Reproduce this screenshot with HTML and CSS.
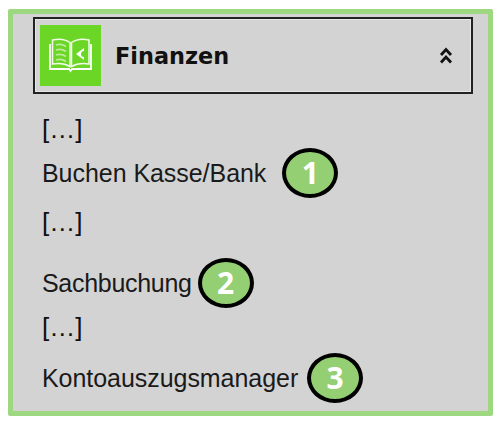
FILE: index.html
```html
<!DOCTYPE html>
<html lang="de">
<head>
<meta charset="utf-8">
<title>Finanzen</title>
<link rel="stylesheet" href="styles.css">
</head>
<body>
<section class="panel">
  <header class="head">
    <span class="tile">
      <svg viewBox="0 0 61 61" width="61" height="61" fill="none" stroke="#fff">
        <path d="M10 19v25h19l1.500 2 1.500-2h19V19" stroke-width="1.800"/>
        <path d="M12.500 15c6-1.500 12.500-1 17.500 2.500v24c-5-3-11.500-3.500-17.500-2.500z" stroke-width="1.500" opacity=".9"/>
        <path d="M49 15c-6-1.500-12.500-1-17.500 2.500v24c5-3 11.500-3.500 17.500-2.500z" stroke-width="1.500" opacity=".9"/>
        <path d="M16 20c3-1 7-.5 10 1.500M16 25c3-1 7-.5 10 1.500M16 30c3-1 7-.5 10 1.500M16 35c3-1 7-.5 10 1.500" stroke-width="1.800" opacity=".55"/>
        <path d="M44 23l-8 6 8 6z" fill="#fff" stroke="none"/>
        <circle cx="44" cy="29" r="3" fill="#6bd626" stroke="none"/>
      </svg>
    </span>
    <h1 class="title">Finanzen</h1>
    <svg class="chev" viewBox="0 0 14 18" width="14" height="18" fill="none" stroke="#111" stroke-width="2.800">
      <path d="M2 8l5-5.500L12 8M2 15.500l5-5.500 5 5.500"/>
    </svg>
  </header>
  <div class="row gap-a"><span class="more">[…]</span></div>
  <div class="row item gap-b"><span>Buchen Kasse/Bank</span><span class="badge gap-1">1</span></div>
  <div class="row gap-c"><span class="more">[…]</span></div>
  <div class="row item gap-d"><span class="narrow">Sachbuchung</span><span class="badge gap-2">2</span></div>
  <div class="row gap-b"><span class="more">[…]</span></div>
  <div class="row item gap-e"><span>Kontoauszugsmanager</span><span class="badge gap-3">3</span></div>
</section>
</body>
</html>
```
FILE: styles.css
```css
html, body {
  margin: 0;
  padding: 0;
  background: #fff;
}
.panel {
  box-sizing: border-box;
  width: 485px;
  height: 407px;
  margin: 9px 0 0 8px;
  padding: 3px 0 0 20px;
  background: #d3d3d3;
  border: 5px solid #9dd77f;
  border-radius: 2px;
  font-family: "Liberation Sans", Arial, sans-serif;
  color: #1a1a1a;
}
.head {
  box-sizing: border-box;
  display: flex;
  align-items: center;
  width: 440px;
  height: 77px;
  padding: 0 18px 0 5px;
  border: 2px solid #222;
  box-shadow: inset 0 0 0 1px #e6e6e6;
}
.tile {
  display: block;
  width: 61px;
  height: 61px;
  background: #6bd626;
}
.tile svg { display: block; }
.title {
  flex: 1;
  margin: 0 0 0 14px;
  font: bold 22.4px "DejaVu Sans", Verdana, sans-serif;
  color: #111;
}
.chev { display: block; }
.row {
  display: flex;
  align-items: center;
  height: 30px;
  padding-left: 9px;
  font-size: 25px;
  letter-spacing: -.05px;
  white-space: nowrap;
}
.item { height: 50px; }
.more { font-size: 26px; color: #111; letter-spacing: 0; }
.narrow { letter-spacing: -.3px; }
.gap-a { margin-top: 20px; }
.gap-b { margin-top: 4px; }
.gap-c { margin-top: 9px; }
.gap-d { margin-top: 21px; }
.gap-e { margin-top: 11px; }
.badge {
  box-sizing: border-box;
  flex: none;
  width: 56px;
  height: 50px;
  border: 4.500px solid #000;
  border-radius: 50%;
  background: #94cf73;
  color: #fff;
  font: bold 30px/41px "Open Sans", sans-serif;
  letter-spacing: 0;
  text-align: center;
}
.gap-1 { margin-left: 16px; }
.gap-2 { margin-left: 6px; }
.gap-3 { margin-left: 9px; }
```
